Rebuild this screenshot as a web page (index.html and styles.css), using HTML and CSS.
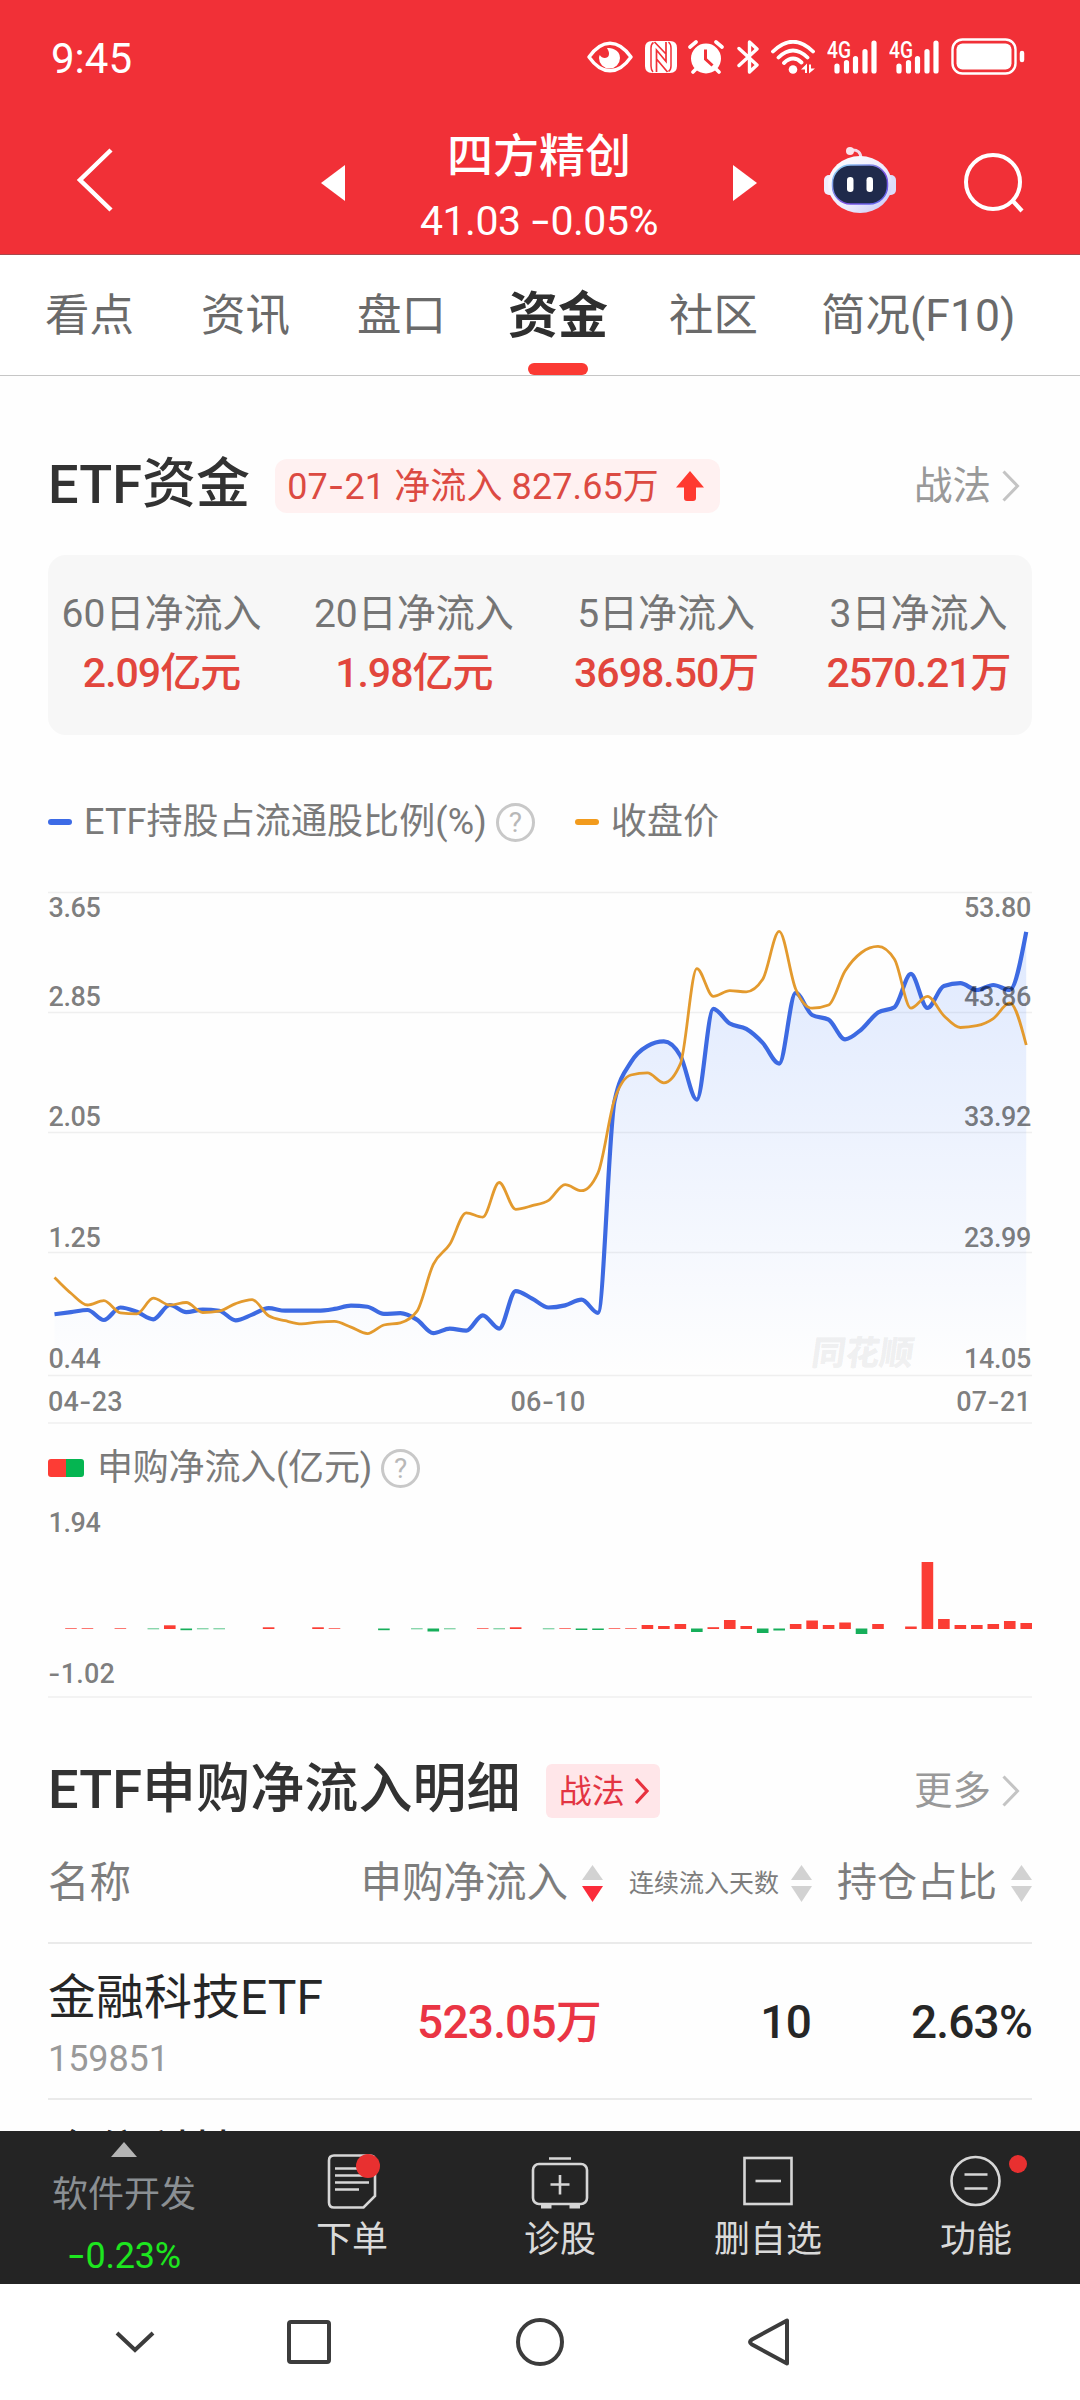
FILE: index.html
```html
<!DOCTYPE html>
<html lang="zh-CN">
<head>
<meta charset="utf-8">
<title>四方精创 - 资金</title>
<link rel="stylesheet" href="styles.css">
</head>
<body>
<header class="top">
  <div class="status">
    <span class="clock">9:45</span>
    <div class="status-icons">
      <svg class="i-eye" width="46" height="32" viewBox="0 0 46 32"><path d="M2 16C9 6 15 2.200 23 2.200S37 6 44 16C37 26 31 29.800 23 29.800S9 26 2 16Z" fill="none" stroke="#fff" stroke-width="3.400" stroke-linejoin="round"/><path d="M20 7c4 0 13 1 13 10a10.500 10.500 0 0 1-21 0c0-1 .3-2 .8-3 1 2 3 3 5 3 4 0 6-4 2.200-10Z" fill="#fff"/></svg>
      <svg class="i-nfc" width="32" height="32" viewBox="0 0 32 32"><path d="M7 0h18q7 0 7 7v18q0 7-7 7H7q-7 0-7-7V7q0-7 7-7Z" fill="#fff"/><path d="M8.500 1.500Q6 3 6 7V25Q6 29 8 31M23.500 1Q26 3 26 7V25Q26 29 23.500 30.500" fill="none" stroke="#f13037" stroke-width="1.500"/><path d="M11.500 31V9L21 20.500V1M11.500 18L22.500 31M21 13L9.500 1" fill="none" stroke="#f13037" stroke-width="1.700"/></svg>
      <svg class="i-alarm" width="36" height="34" viewBox="0 0 36 34"><circle cx="18" cy="18.500" r="15" fill="#fff"/><path d="M2 7l6-5M34 7l-6-5M5 32l4-4M31 32l-4-4" stroke="#fff" stroke-width="3.600" stroke-linecap="round"/><path d="M17.500 9.500v9.500l7 6.500" fill="none" stroke="#f13037" stroke-width="3"/></svg>
      <svg class="i-bt" width="22" height="34" viewBox="0 0 22 34"><path d="M2 8.500L20 25 12.500 32V2L20 9 2 25.500" fill="none" stroke="#fff" stroke-width="3.400" stroke-linejoin="round" stroke-linecap="round"/></svg>
      <svg class="i-wifi" width="44" height="34" viewBox="0 0 44 34"><g fill="none" stroke="#fff" stroke-width="3.800" stroke-linecap="round"><path d="M2 11.500Q22-8 42 11.500M7.500 17.500Q22 3.500 36.500 17.500M13 23Q22 14.500 30.500 22.500"/></g><circle cx="22" cy="29.500" r="4.300" fill="#fff"/><path d="M30 29.500l6-6v9.500h-2v-3.500ZM44 28.500l-6 5v-9h2v4Z" fill="#fff"/></svg>
      <svg class="i-sig" width="50" height="34" viewBox="0 0 50 34"><text class="net" x="0" y="17.500" textLength="24" lengthAdjust="spacingAndGlyphs">4G</text><path d="M10 26v5M19.500 22.500v8.500M28.500 18.500v12.500M38 11.500v19.500M47 3v28" stroke="#fff" stroke-width="5.200" stroke-linecap="round"/></svg>
      <svg class="i-sig" width="50" height="34" viewBox="0 0 50 34"><text class="net" x="0" y="17.500" textLength="24" lengthAdjust="spacingAndGlyphs">4G</text><path d="M10 26v5M19.500 22.500v8.500M28.500 18.500v12.500M38 11.500v19.500M47 3v28" stroke="#fff" stroke-width="5.200" stroke-linecap="round"/></svg>
      <svg class="i-batt" width="74" height="38" viewBox="0 0 74 38"><rect x="1.500" y="1.500" width="63" height="34" rx="10" fill="none" stroke="#fff" stroke-width="2.400"/><rect x="5.500" y="5.500" width="55" height="26" rx="6" fill="#fff"/><path d="M71 15v7" stroke="#fff" stroke-width="4.500" stroke-linecap="round"/></svg>
    </div>
  </div>
  <div class="titlebar">
    <svg class="back" width="40" height="68" viewBox="0 0 40 68"><path d="M38 4L7 34 38 64" fill="none" stroke="#fff" stroke-width="4.500"/></svg>
    <svg class="prev" width="24" height="36" viewBox="0 0 24 36"><path d="M24 0v36L0 18Z" fill="#fff"/></svg>
    <div class="stock">
      <h1>四方精创</h1>
      <div class="quote">41.03 <span class="dash">-</span>0.05%</div>
    </div>
    <svg class="next" width="24" height="36" viewBox="0 0 24 36"><path d="M0 0v36L24 18Z" fill="#fff"/></svg>
    <svg class="robot" width="74" height="68" viewBox="0 0 74 68">
      <defs>
        <linearGradient id="shell" x1="0" y1="0" x2="1" y2="1"><stop offset="0" stop-color="#fff"/><stop offset=".6" stop-color="#eceafd"/><stop offset="1" stop-color="#c3c4f4"/></linearGradient>
        <linearGradient id="rim" x1="0" y1="0" x2="1" y2="1"><stop offset="0" stop-color="#8fe0f5"/><stop offset=".6" stop-color="#7a4fe0"/><stop offset="1" stop-color="#5a6cf0"/></linearGradient>
      </defs>
      <path d="M28 4q10-1 10 9" fill="none" stroke="#f3d9ea" stroke-width="3"/><circle cx="27" cy="5" r="4" fill="#fbe3ec"/>
      <rect x="1" y="29" width="12" height="20" rx="5" fill="#f1eefe"/><rect x="61" y="29" width="12" height="20" rx="5" fill="#dcdcfa"/>
      <ellipse cx="37" cy="38.500" rx="32" ry="28.500" fill="url(#shell)"/>
      <rect x="9.500" y="19" width="55" height="39" rx="18" fill="#1f2a4b" stroke="url(#rim)" stroke-width="1.500"/>
      <rect x="24" y="31" width="6.500" height="15" rx="3.200" fill="#fff"/><rect x="43.500" y="31" width="6.500" height="15" rx="3.200" fill="#fff"/>
    </svg>
    <svg class="search" width="62" height="62" viewBox="0 0 62 62"><circle cx="29" cy="30" r="27" fill="none" stroke="#fff" stroke-width="4"/><path d="M48 48l10 11" stroke="#fff" stroke-width="4.200"/></svg>
  </div>
</header>

<nav class="tabs">
  <a>看点</a><a>资讯</a><a>盘口</a><a class="active">资金</a><a>社区</a><a>简况(F10)</a>
</nav>

<main>
  <section class="section-head first">
    <h2>ETF资金</h2>
    <div class="pill"><span>07<span class="dash">-</span>21 净流入 827.65万</span>
      <svg width="28" height="30" viewBox="0 0 28 30"><path d="M14 0L28 16.500H20V27q0 3-3 3H11q-3 0-3-3V16.500H0Z" fill="#ff3a30"/></svg>
    </div>
    <a class="more">战法<svg width="18" height="32" viewBox="0 0 18 32"><path d="M1.500 1.500L15.500 16 1.500 30.500" fill="none" stroke="#c4c4c4" stroke-width="3"/></svg></a>
  </section>

  <section class="card">
    <div class="stat"><span>60日净流入</span><b>2.09亿元</b></div>
    <div class="stat"><span>20日净流入</span><b>1.98亿元</b></div>
    <div class="stat"><span>5日净流入</span><b>3698.50万</b></div>
    <div class="stat"><span>3日净流入</span><b>2570.21万</b></div>
  </section>

  <div class="legend">
    <i class="mark blue"></i><span>ETF持股占流通股比例(%)</span><i class="help">?</i>
    <i class="mark orange"></i><span>收盘价</span>
  </div>

  <div class="chart">
    <svg id="lines" width="984" height="532" viewBox="0 0 984 532">
      <defs><linearGradient id="fade" gradientUnits="userSpaceOnUse" x1="0" y1="39" x2="0" y2="483"><stop offset="0" stop-color="#3d7bff" stop-opacity=".16"/><stop offset="1" stop-color="#3d7bff" stop-opacity="0"/></linearGradient></defs>
      <path class="grid" d="M0 .5H984M0 120.500H984M0 240.500H984M0 360.500H984M0 483.500H984M0 531H984"/>
      <path id="area" fill="url(#fade)"/>
      <path id="ratio"/>
      <path id="price"/>
      <g class="axis">
        <text x="0.500" y="24.500">3.65</text><text x="0.500" y="113.800">2.85</text><text x="0.500" y="233.800">2.05</text><text x="0.500" y="354.800">1.25</text><text x="0.500" y="475.500">0.44</text>
        <g text-anchor="end"><text x="983" y="24.500">53.80</text><text x="983" y="113.800">43.86</text><text x="983" y="233.800">33.92</text><text x="983" y="354.800">23.99</text><text x="983" y="475.500">14.05</text></g>
        <g class="dates"><text x="0" y="518.500">04<tspan class="dash">-</tspan>23</text><text x="500" y="518.500" text-anchor="middle">06<tspan class="dash">-</tspan>10</text><text x="983" y="518.500" text-anchor="end">07<tspan class="dash">-</tspan>21</text></g>
      </g>
    </svg>
    <span class="brand">同花顺</span>
  </div>

  <div class="legend second">
    <i class="swatch"></i><span>申购净流入(亿元)</span><i class="help">?</i>
  </div>
  <div class="chart">
    <svg width="984" height="211" viewBox="0 0 984 211">
      <g id="bars"></g>
      <path class="grid" d="M0 210H984"/>
      <g class="axis"><text x="0.500" y="44.500">1.94</text><text class="dates" x="0" y="196"><tspan class="dash">-</tspan>1.02</text></g>
    </svg>
  </div>

  <section class="section-head detail">
    <h2>ETF申购净流入明细</h2>
    <a class="badge">战法<svg width="16" height="28" viewBox="0 0 16 28"><path d="M2 2L13 14 2 26" fill="none" stroke="#e8323f" stroke-width="3.200"/></svg></a>
    <a class="more">更多<svg width="18" height="32" viewBox="0 0 18 32"><path d="M1.500 1.500L15.500 16 1.500 30.500" fill="none" stroke="#c4c4c4" stroke-width="3"/></svg></a>
  </section>

  <div class="row thead">
    <div class="c1">名称</div>
    <div class="c2">申购净流入<svg class="sort down" width="21" height="37" viewBox="0 0 21 37"><path class="u" d="M10.500 0L21 15H0Z"/><path class="d" d="M0 21H21L10.500 37Z"/></svg></div>
    <div class="c3">连续流入天数<svg class="sort" width="21" height="37" viewBox="0 0 21 37"><path class="u" d="M10.500 0L21 15H0Z"/><path class="d" d="M0 21H21L10.500 37Z"/></svg></div>
    <div class="c4">持仓占比<svg class="sort" width="21" height="37" viewBox="0 0 21 37"><path class="u" d="M10.500 0L21 15H0Z"/><path class="d" d="M0 21H21L10.500 37Z"/></svg></div>
  </div>
  <div class="row fund">
    <div class="c1"><b>金融科技ETF</b><small>159851</small></div>
    <div class="c2">523.05万</div><div class="c3">10</div><div class="c4">2.63%</div>
  </div>
  <div class="row fund">
    <div class="c1"><b>金信科技</b></div>
  </div>
</main>

<footer class="actions">
  <div class="index">
    <svg width="26" height="15" viewBox="0 0 26 15"><path d="M13 0L26 15H0Z" fill="#b4b4b4"/></svg>
    <span>软件开发</span>
    <em><span class="dash">-</span>0.23%</em>
  </div>
  <div class="act"><svg width="60" height="60" viewBox="0 0 60 60"><g fill="none" stroke="#d6d6d6" stroke-width="2.600"><path d="M12 4.500H48q5 0 5 5V45L41.500 56.500H12q-5 0-5-5V9.500q0-5 5-5Z"/><path d="M13 17.500H38M13 24.500H42M13 31.500H47M13 38.500H37"/></g><circle cx="46" cy="15" r="12" fill="#e83030"/></svg>下单</div>
  <div class="act"><svg width="60" height="60" viewBox="0 0 60 60"><g fill="none" stroke="#d6d6d6" stroke-width="2.600"><rect x="3" y="13" width="54" height="40" rx="6"/><path d="M19 7.500H41M20.500 33.500H39.500M30 24V43.500"/><path d="M11 55.500H21.500M39.500 55.500H50" stroke-width="4"/></g></svg>诊股</div>
  <div class="act"><svg width="60" height="60" viewBox="0 0 60 60"><g fill="none" stroke="#d6d6d6" stroke-width="2.600"><rect x="6.500" y="7" width="47" height="46"/><path d="M17.500 30H43"/></g></svg>删自选</div>
  <div class="act"><svg width="60" height="60" viewBox="0 0 60 60"><g fill="none" stroke="#d6d6d6" stroke-width="2.600"><circle cx="29.500" cy="30" r="24"/><path d="M18.500 23.500H41.500M18.500 37.500H41.500"/></g></svg>功能<i class="dot"></i></div>
</footer>
<div class="sysnav">
  <svg class="n1" width="40" height="24" viewBox="0 0 40 24"><path d="M2 3L20 20 38 3" fill="none" stroke="#3c3c3c" stroke-width="4"/></svg>
  <svg class="n2" width="46" height="46" viewBox="0 0 46 46"><rect x="3" y="3" width="40" height="40" rx="2" fill="none" stroke="#3c3c3c" stroke-width="4"/></svg>
  <svg class="n3" width="50" height="50" viewBox="0 0 50 50"><circle cx="25" cy="25" r="22" fill="none" stroke="#3c3c3c" stroke-width="4"/></svg>
  <svg class="n4" width="46" height="50" viewBox="0 0 46 50"><path d="M41 3.500V46.500L6 27.500Q2 25 6 22.500Z" fill="none" stroke="#3c3c3c" stroke-width="4" stroke-linejoin="round"/></svg>
</div>
<script src="chart.js"></script>
</body>
</html>
```
FILE: styles.css
```css
* { box-sizing: border-box; }
body {
  margin: 0;
  width: 1080px;
  height: 2400px;
  display: flex;
  flex-direction: column;
  overflow: hidden;
  background: #fefefe;
  color: #323232;
  font-family: Roboto, "Noto Sans CJK SC", sans-serif;
  line-height: 1;
}
h1, h2 { margin: 0; font-weight: 500; }
i, em { font-style: normal; }
svg { display: block; flex: none; }
.dash { font-family: Inter, sans-serif; }

.top { height: 255px; background: #f13037; color: #fff; border-bottom: 1px solid #a8484c; }
.status { height: 110px; display: flex; justify-content: space-between; padding: 38px 55px 0 51px; }
.clock { font-size: 42px; line-height: 42px; }
.status-icons { display: flex; align-items: center; height: 38px; }
.i-nfc { margin-left: 12px; }
.i-alarm { margin-left: 11px; }
.i-bt { margin-left: 13px; }
.i-wifi { margin-left: 12px; }
.i-sig { margin-left: 12px; }
.i-batt { margin-left: 12px; }
.net { font: 500 23px Roboto, sans-serif; fill: #fff; }

.titlebar { height: 144px; display: flex; align-items: flex-start; padding: 0 54px 0 73px; }
.back { margin-top: 36px; }
.prev { margin: 55px 0 0 208px; }
.next { margin: 55px 0 0; }
.stock { width: 390px; text-align: center; }
.stock h1 { font-size: 46px; line-height: 60px; margin-top: 16px; }
.quote { font-size: 41px; line-height: 48px; margin-top: 10px; letter-spacing: -.5px; }
.quote .dash { display: inline-block; transform: scaleX(1.150); margin: 0 1px; }
.robot { margin: 36px 0 0 66px; }
.search { margin: 42px 0 0 67px; }

.tabs { height: 121px; display: flex; padding-left: 45px; border-bottom: 1px solid #c6c6c6; background: #fff; white-space: nowrap; }
.tabs a { font-size: 44.500px; line-height: 122px; margin-right: 67px; color: #6a6a6a; }
.tabs .active { position: relative; font-size: 50px; font-weight: 700; color: #2f2f2f; margin: 0 61px 0 -5px; }
.tabs .active::after { content: ""; position: absolute; left: 20px; bottom: 0; width: 60px; height: 12px; border-radius: 6px; background: #fb3a34; }
.tabs a:last-child { margin-left: -4px; }

main { flex: 1; min-height: 0; overflow: hidden; padding: 0 48px; }
.section-head { display: flex; align-items: center; height: 54px; }
.section-head h2 { font-size: 54px; line-height: 54px; position: relative; top: -1px; letter-spacing: .1px; }
.first { margin-top: 83px; }
.pill { margin-left: 25px; height: 54px; display: flex; align-items: center; padding: 0 16px 0 12px; border-radius: 12px; background: #fff1f1; color: #dc4a42; font-size: 36px; letter-spacing: .1px; }
.pill svg { margin-left: 17px; }
.more { margin-left: auto; display: flex; align-items: center; font-size: 38.500px; color: #999; padding-right: 12px; }
.more svg { margin-left: 11px; }

.card { margin-top: 42px; height: 180px; border-radius: 18px; background: #f7f7f7; display: flex; justify-content: space-between; }
.stat { width: 227px; display: flex; flex-direction: column; align-items: center; white-space: nowrap; }
.stat span { margin-top: 38px; font-size: 39px; line-height: 42px; letter-spacing: 0; color: #757575; }
.stat b { margin-top: 17px; font-size: 41px; line-height: 42px; font-weight: 500; letter-spacing: -1px; color: #e2463d; }

.legend { margin-top: 69px; height: 36px; display: flex; align-items: center; font-size: 36px; color: #7a7a7a; white-space: nowrap; letter-spacing: .1px; }
.mark { width: 24px; height: 6px; border-radius: 3px; margin-right: 12px; }
.blue { background: #3d6be6; }
.orange { background: #f29b1d; margin-left: 40px; }
.help { width: 39px; height: 39px; border: 3px solid #c8c8c8; border-radius: 50%; margin-left: 9px; font-size: 28px; line-height: 34px; text-align: center; color: #b8b8b8; }
.second { margin-top: 26px; margin-bottom: 1px; letter-spacing: -.2px; }
.swatch { width: 36px; height: 18px; border-radius: 3px; margin-right: 13px; background: linear-gradient(90deg, #fd3c35 50%, #05b551 50%); }

.chart { position: relative; }
.chart svg { overflow: visible; }
#lines { margin-top: 52px; }
.grid { stroke: #efefef; stroke-width: 1.500; fill: none; }
#ratio { fill: none; stroke: #3d6ae2; stroke-width: 4.200; }
#price { fill: none; stroke: #e39a2e; stroke-width: 2.800; }
.axis { font: 500 27px Roboto, sans-serif; fill: rgba(0, 0, 0, .52); letter-spacing: -.4px; }
.dates { letter-spacing: .2px; }
.brand { position: absolute; left: 764px; top: 443px; font-size: 34px; line-height: 36px; font-weight: 900; color: rgba(120, 120, 120, .11); transform: skewX(-8deg); }
.up { fill: #fb3d34; }
.down-bar { fill: #16ae5a; }

.detail { margin-top: 66px; }
.badge { margin-left: 25px; width: 114px; height: 54px; border-radius: 6px; background: #ffe6e9; color: #e33442; font-size: 33px; display: flex; align-items: center; padding-left: 13px; }
.badge svg { margin-left: 9px; }

.row { display: flex; align-items: center; border-bottom: 2px solid #eaeaea; white-space: nowrap; }
.row > div { display: flex; align-items: center; justify-content: flex-end; }
.row .c1 { width: 200px; justify-content: flex-start; }
.c2 { width: 355px; }
.c3 { width: 209px; }
.c4 { width: 220px; }
.thead { height: 126px; padding-top: 6px; font-size: 41.500px; color: #7d7d7d; }
.thead .c3 { font-size: 25px; }
.thead .c4 { font-size: 40px; }
.sort { margin-left: 14px; fill: #d2d2d2; }
.c3 .sort { margin-left: 12px; }
.down .d { fill: #fb2b3a; }
.fund { height: 156px; font-size: 46px; font-weight: 500; color: #262626; letter-spacing: -.8px; padding-top: 2px; }
.row.fund .c1 { flex-direction: column; align-items: flex-start; justify-content: flex-start; height: 154px; letter-spacing: 0; }
.fund b { margin-top: 28px; font-size: 48px; line-height: 50px; font-weight: 400; }
.fund small { margin-top: 16px; font-size: 36px; line-height: 40px; font-weight: 400; color: #999; letter-spacing: -.1px; }
.fund .c2 { color: #ea3544; width: 353px; }
.fund .c3 { width: 210px; }
.fund .c4 { width: 221px; }

.actions { height: 153px; background: #242424; display: flex; }
.index { width: 248px; display: flex; flex-direction: column; align-items: center; font-size: 36px; color: #8a8f93; padding-top: 11px; }
.index span { line-height: 38px; }
.index > span { margin-top: 19px; }
.index em { margin-top: 22px; line-height: 38px; color: #1de61f; letter-spacing: -.2px; }
.index .dash { display: inline-block; transform: scaleX(1.150); margin: 0 1px; }
.act { position: relative; width: 208px; display: flex; flex-direction: column; align-items: center; font-size: 36px; line-height: 40px; color: #dadada; padding-top: 20px; }
.act svg { margin-bottom: 9px; }
.dot { position: absolute; left: 137px; top: 24px; width: 18px; height: 18px; border-radius: 50%; background: #e83030; }

.sysnav { height: 116px; background: #fff; display: flex; align-items: center; padding-left: 115px; }
.n2 { margin-left: 131px; }
.n3 { margin-left: 183px; }
.n4 { margin-left: 181px; }
```
FILE: chart.js
```js
// Level of each trading day, 04-23 to 07-21, measured down from the top gridline (35) to the axis (1387).
const ratio = [1216,1210,1204,1232,1197,1209,1230,1190,1210,1203,1206,1233,1217,1199,1206,1206,1206,1201,1192,1195,
  1215,1213,1231,1269,1256,1262,1219,1256,1151,1172,1197,1191,1175,1212,620,510,465,452,492,615,
  361,402,417,456,514,316,378,391,446,418,371,356,263,358,297,289,308,294,308,145];
const price = [1113,1157,1190,1178,1212,1215,1171,1190,1183,1211,1207,1186,1175,1220,1234,1243,1238,1236,1252,1270,
  1246,1240,1208,1076,1020,932,944,847,922,912,897,853,870,820,615,546,540,568,515,248,
  326,310,313,278,144,305,359,350,255,203,186,222,359,326,380,413,408,388,344,462];
// Day index -> bar height in px; negative values are net outflows.
const flow = {1:.7,2:.7,4:.7,6:-.7,7:3.7,8:-1.7,9:-.7,10:-.7,13:1.7,16:1.7,17:.7,20:-1.7,22:-.7,23:-3,24:-.7,26:.7,27:-.7,
  28:1.7,30:-.7,31:.7,32:-1.5,33:-1.5,34:.7,35:.7,36:4,37:3,38:5,39:-3.5,40:1.8,41:9,42:3,43:-4.5,44:-2,45:5,46:8.5,
  47:4,48:6.5,49:-5.5,50:5,52:2.5,53:67,54:10,55:4,56:4,57:5,58:8,59:6};

const STEP = 16.47, LEFT = 6.5, BASE = 142;
const toPoints = a => a.map((v, i) => [LEFT + STEP * i, (v - 35) / 2.8 + .5]);

// Monotone cubic interpolation through the points.
function curve(p) {
  const n = p.length, s = [], m = [];
  for (let i = 0; i < n - 1; i++) s[i] = (p[i + 1][1] - p[i][1]) / STEP;
  for (let i = 1; i < n - 1; i++) {
    const a = s[i - 1], b = s[i];
    m[i] = a * b <= 0 ? 0 : Math.sign(a) * Math.min(Math.abs(a) * 2, Math.abs(b) * 2, Math.abs(a + b) / 2);
  }
  m[0] = s[0];
  m[n - 1] = (3 * s[n - 2] - m[n - 2]) / 2;
  let d = `M${p[0]}`;
  for (let i = 0; i < n - 1; i++) {
    const h = STEP / 3;
    d += `C${p[i][0] + h} ${p[i][1] + m[i] * h} ${p[i + 1][0] - h} ${p[i + 1][1] - m[i + 1] * h} ${p[i + 1][0]} ${p[i + 1][1]}`;
  }
  return d;
}

const line = curve(toPoints(ratio));
document.getElementById('ratio').setAttribute('d', line);
document.getElementById('area').setAttribute('d', `${line}V483H${LEFT}Z`);
document.getElementById('price').setAttribute('d', curve(toPoints(price)));

const bars = document.getElementById('bars');
for (const [i, h] of Object.entries(flow)) {
  const r = document.createElementNS('http://www.w3.org/2000/svg', 'rect');
  const x = LEFT + STEP * i - 5.8;
  r.setAttribute('x', x);
  r.setAttribute('width', Math.min(11.6, 984 - x));
  r.setAttribute('y', h > 0 ? BASE - h : BASE - .5);
  r.setAttribute('height', Math.abs(h));
  r.setAttribute('class', h > 0 ? 'up' : 'down-bar');
  bars.append(r);
}
```
